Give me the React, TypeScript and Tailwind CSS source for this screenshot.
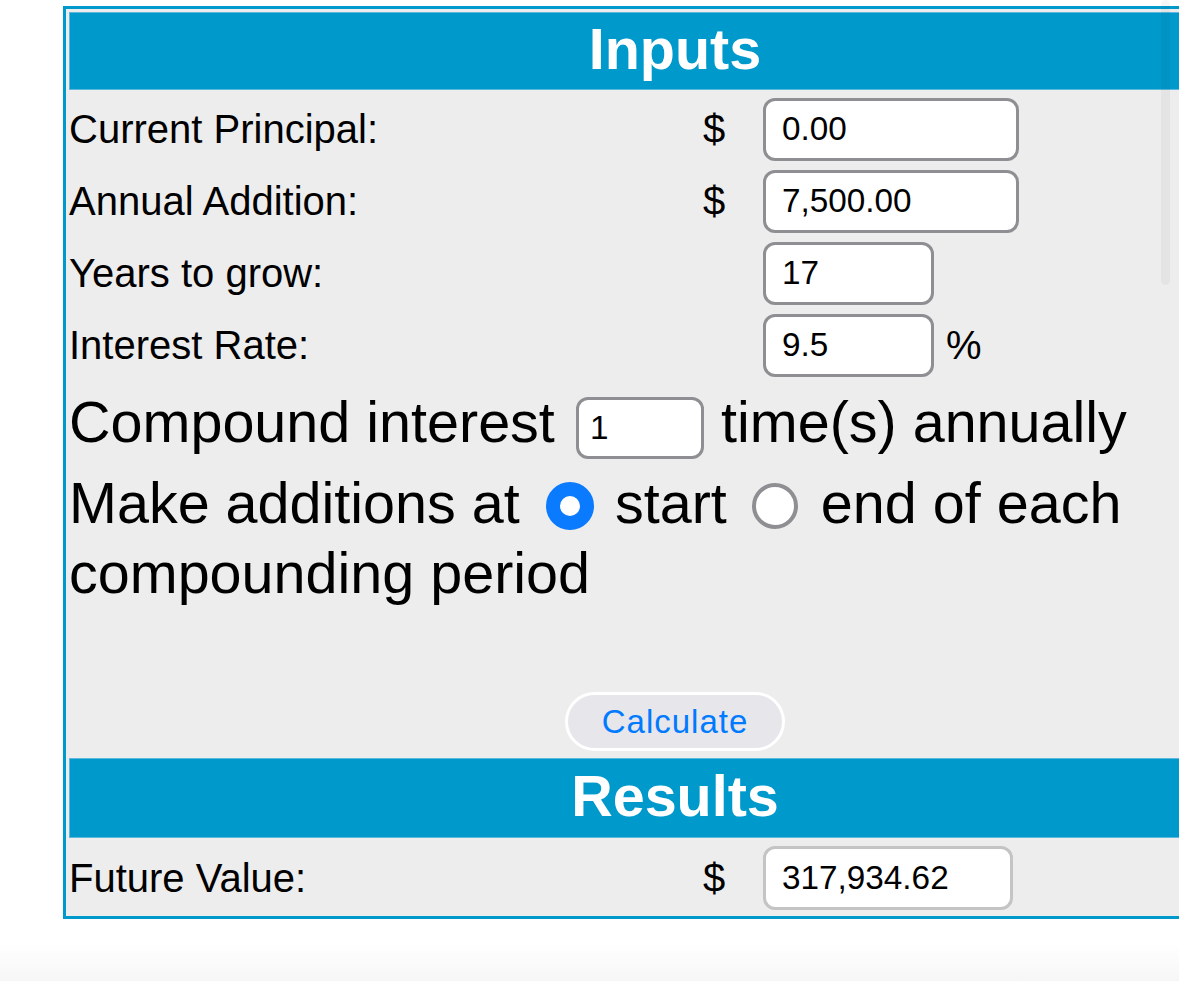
const font = "font-['Liberation_Sans',Arial,sans-serif]";

function Field({ value, width, light }: { value: string; width: string; light?: boolean }) {
  return (
    <div
      className={`${width} flex h-[63px] shrink-0 items-center rounded-[12px] border-[3px] bg-white pl-[16px] text-[33.3px] text-black ${
        light ? "border-[#c4c4c4]" : "border-[#8e8e93]"
      }`}
    >
      {value}
    </div>
  );
}

function Row({ label, dollar, children }: { label: string; dollar?: boolean; children: React.ReactNode }) {
  return (
    <div className="flex h-[72px] items-center text-[40px] text-black">
      <div className="w-[634px] shrink-0">{label}</div>
      <div className="w-[60px] shrink-0">{dollar ? "$" : ""}</div>
      {children}
    </div>
  );
}

function Header({ title, tall }: { title: string; tall?: boolean }) {
  return (
    <div
      className={`flex ${tall ? "h-[80px]" : "h-[78px]"} items-center justify-center border border-[#5cb8dc] bg-[#0099cc] pb-[4px] text-[57.5px] font-bold text-white`}
    >
      {title}
    </div>
  );
}

export default function App() {
  return (
    <div className={`relative h-[981px] w-[1179px] overflow-hidden bg-white ${font}`}>
      <div className="ml-[63px] mt-[6px] w-[1224px] border-[3px] border-[#0099cc] bg-[#ededed] p-[3px]">
        <Header title="Inputs" />

        <div className="mt-[3px]">
          <Row label="Current Principal:" dollar>
            <Field value="0.00" width="w-[256px]" />
          </Row>
          <Row label="Annual Addition:" dollar>
            <Field value="7,500.00" width="w-[256px]" />
          </Row>
          <Row label="Years to grow:">
            <Field value="17" width="w-[171px]" />
          </Row>
          <Row label="Interest Rate:">
            <Field value="9.5" width="w-[171px]" />
            <span className="ml-[12px]">%</span>
          </Row>
        </div>

        <div className="text-[57.5px] text-black">
          <div className="flex h-[82px] items-center">
            <span className="w-[507px] shrink-0 whitespace-nowrap">Compound interest</span>
            <div className="mt-[12px] flex h-[62px] w-[128px] shrink-0 items-center rounded-[12px] border-[3px] border-[#8e8e93] bg-white pl-[11px] text-[33.3px]">
              1
            </div>
            <span className="ml-[17px] whitespace-nowrap">time(s) annually</span>
          </div>

          <div className="flex h-[80px] items-center">
            <span className="w-[477px] shrink-0 whitespace-nowrap">Make additions at</span>
            <span className="mt-[6px] h-[48px] w-[48px] shrink-0 rounded-full border-[14px] border-[#0a7aff] bg-white" />
            <span className="ml-[21px] whitespace-nowrap">start</span>
            <span className="ml-[25px] mt-[6px] h-[46px] w-[46px] shrink-0 rounded-full border-[4px] border-[#8e8e93] bg-white" />
            <span className="ml-[23px] whitespace-nowrap">end of each</span>
          </div>

          <div className="flex h-[60px] items-center">
            <span className="whitespace-nowrap">compounding period</span>
          </div>
        </div>

        <div className="flex h-[153px] items-end justify-center pb-[5px]">
          <button className="flex h-[59px] w-[220px] items-center justify-center rounded-full border-[3px] border-white bg-[#e6e6eb] text-[33px] tracking-[1px] text-[#007aff]">
            Calculate
          </button>
        </div>

        <div className="mt-[2px]">
          <Header title="Results" tall />
        </div>

        <div className="pt-[5px]">
          <div className="flex h-[70px] items-center text-[40px] text-black">
            <div className="w-[634px] shrink-0">Future Value:</div>
            <div className="w-[60px] shrink-0">$</div>
            <div className="flex h-[64px] w-[250px] shrink-0 items-center rounded-[12px] border-[3px] border-[#c4c4c4] bg-white pl-[16px] text-[33.3px]">
              317,934.62
            </div>
          </div>
        </div>
      </div>

      <div className="mt-[24px] h-[41px] bg-gradient-to-b from-white to-[#f6f6f6]" />

      <div className="absolute left-[1161px] top-0 h-[285px] w-[9px] rounded-full bg-black/[0.035]" />
    </div>
  );
}
